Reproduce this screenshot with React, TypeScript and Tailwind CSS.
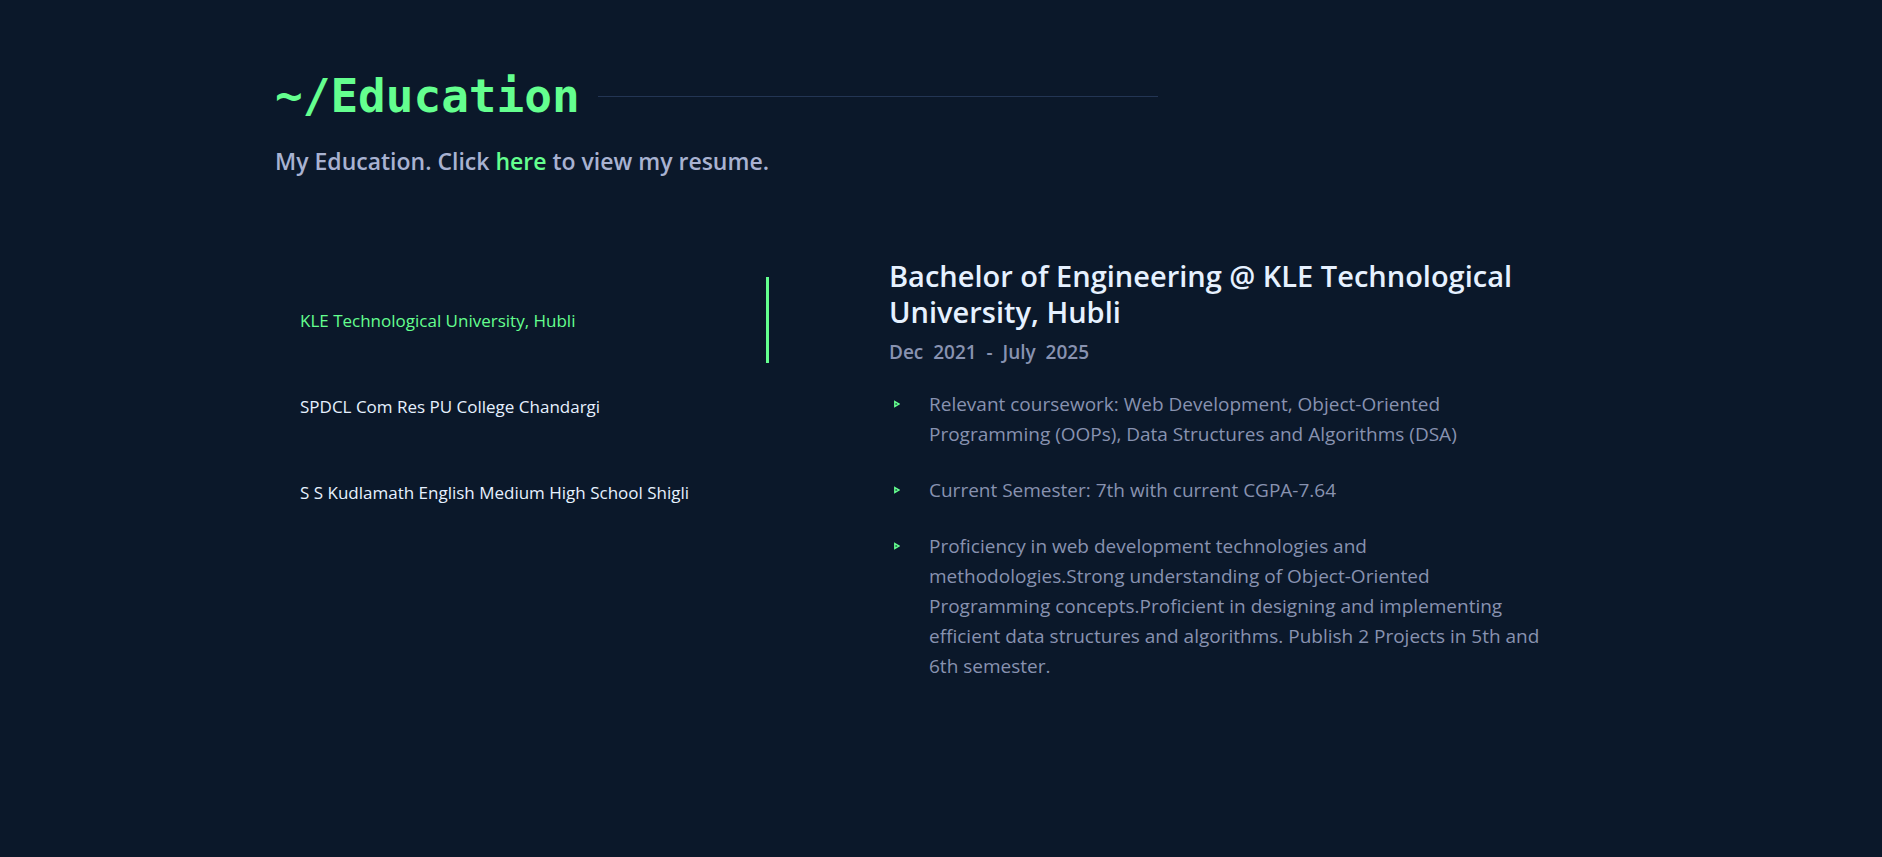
import { useState } from "react";

type School = {
  name: string;
  degree: string;
  period: string;
  points: string[];
};

const schools: School[] = [
  {
    name: "KLE Technological University, Hubli",
    degree: "Bachelor of Engineering",
    period: "Dec  2021  -  July  2025",
    points: [
      "Relevant coursework: Web Development, Object-Oriented Programming (OOPs), Data Structures and Algorithms (DSA)",
      "Current Semester: 7th with current CGPA-7.64",
      "Proficiency in web development technologies and methodologies.Strong understanding of Object-Oriented Programming concepts.Proficient in designing and implementing efficient data structures and algorithms. Publish 2 Projects in 5th and 6th semester.",
    ],
  },
  { name: "SPDCL Com Res PU College Chandargi", degree: "Pre-University", period: "", points: [] },
  { name: "S S Kudlamath English Medium High School Shigli", degree: "High School", period: "", points: [] },
];

function Bullet() {
  return (
    <svg viewBox="0 0 7 8" className="mt-[11px] ml-[5px] h-[8px] w-[6px] shrink-0 text-[#64ff8f]" fill="none" stroke="currentColor" strokeWidth="1.8" aria-hidden="true">
      <path d="M1 1.2 L5.8 4 L1 6.8 Z" />
    </svg>
  );
}

export default function App() {
  const [active, setActive] = useState(0);
  const school = schools[active];

  return (
    <main className="min-h-screen bg-[#0b182a] px-6 pt-[66px] pb-16 font-['Open_Sans',sans-serif]">
      <section className="mx-auto max-w-[1332px]">
        <header>
          <div className="flex items-center gap-[18px]">
            <h1 className="font-['DejaVu_Sans_Mono',monospace] text-[46px] leading-[60px] font-bold text-[#64ff8f]">~/Education</h1>
            <span className="h-px w-full max-w-[560px] bg-[#233554]" />
          </div>
          <p className="mt-[17px] text-[23px] leading-[36px] font-semibold text-[#a8b2d1]">
            My Education. Click <a href="#resume" className="text-[#64ff8f]">here</a> to view my resume.
          </p>
        </header>

        <div className="mt-[79px] flex gap-[120px]">
          <nav className="mt-[19px] flex w-[494px] flex-col self-start" aria-label="Schools">
            {schools.map((item, index) => (
              <button
                key={item.name}
                type="button"
                onClick={() => setActive(index)}
                className={
                  index === active
                    ? "h-[86px] border-r-[3px] border-[#64ff8f] px-[25px] pt-[2px] text-left text-[17px] text-[#64ff8f]"
                    : "h-[86px] border-r-[3px] border-transparent px-[25px] pt-[2px] text-left text-[17px] text-[#e6f1ff]"
                }
              >
                {item.name}
              </button>
            ))}
          </nav>

          <article className="max-w-[661px] min-w-0 flex-1">
            <h2 className="text-[29px] leading-[36px] font-semibold text-[#e6f1ff]">
              {`${school.degree} @ ${school.name}`}
            </h2>
            <p className="mt-[7px] text-[19px] leading-[30px] font-semibold whitespace-pre text-[#8892b0]">{school.period}</p>
            <ul className="mt-[22px] flex flex-col gap-[26px] text-[19px] leading-[30px] text-[#8892b0]">
              {school.points.map((point) => (
                <li key={point} className="flex gap-[29px]">
                  <Bullet />
                  <span>{point}</span>
                </li>
              ))}
            </ul>
          </article>
        </div>
      </section>
    </main>
  );
}
